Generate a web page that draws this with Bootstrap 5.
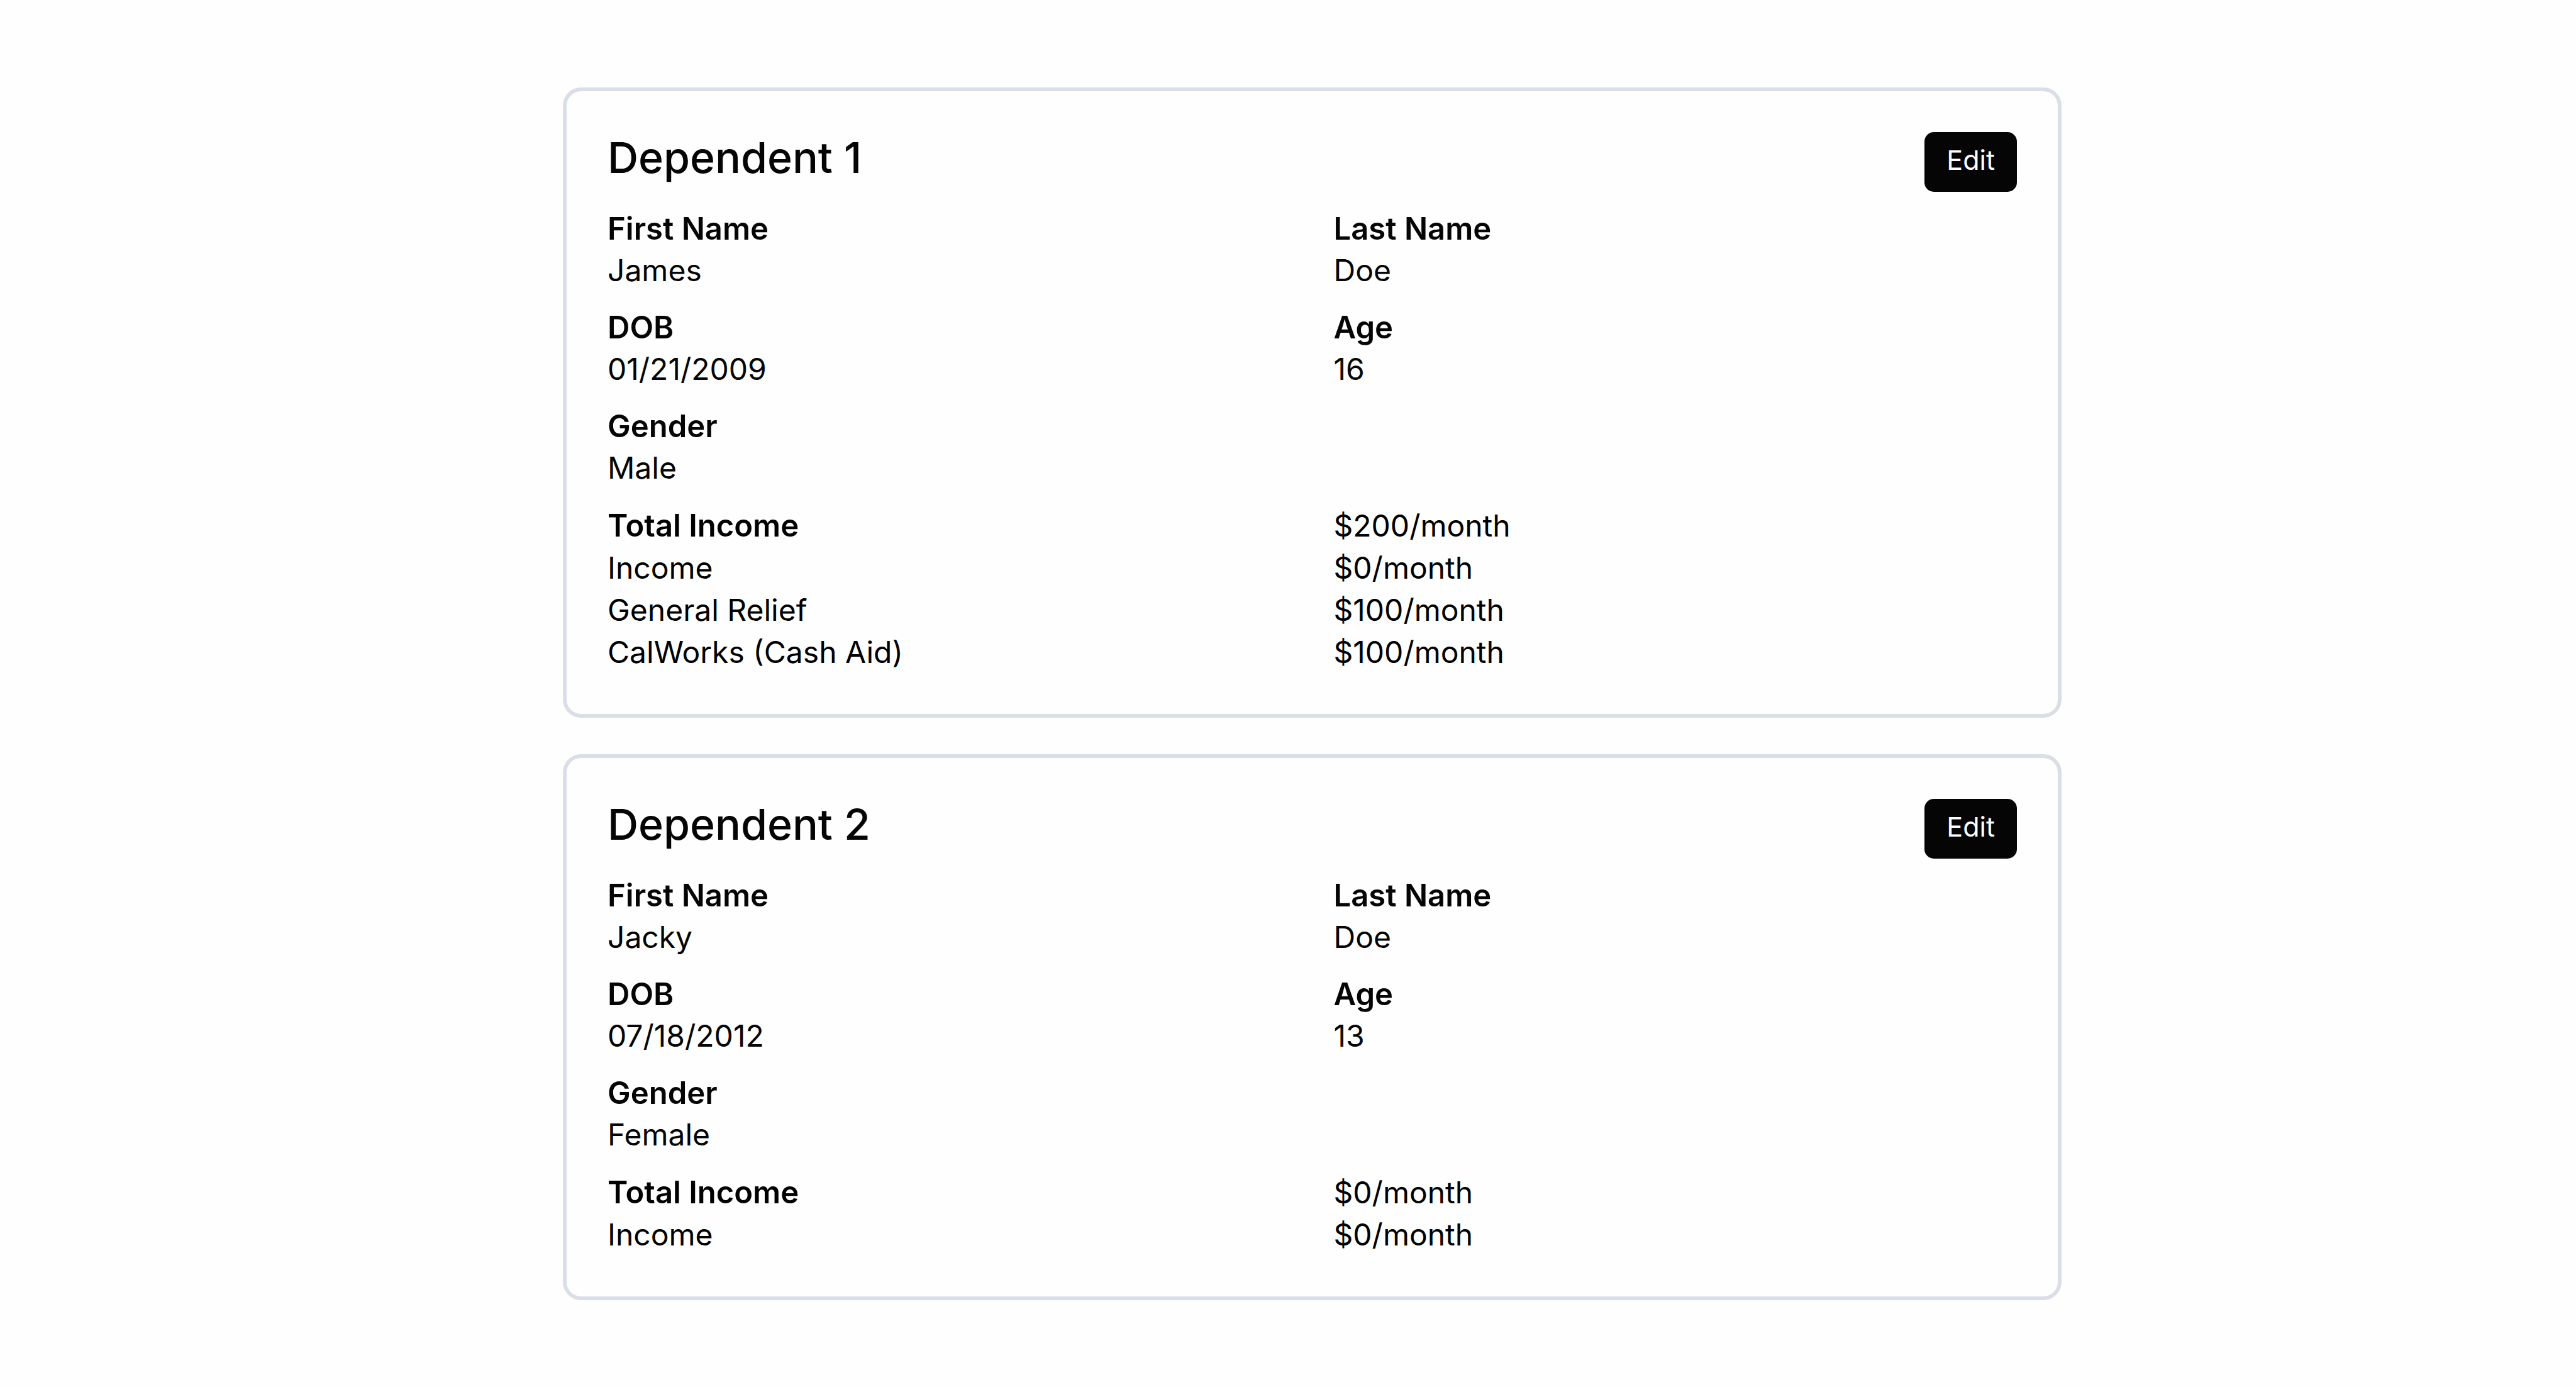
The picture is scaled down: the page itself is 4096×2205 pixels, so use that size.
<!DOCTYPE html>
<html lang="en">
<head>
<meta charset="utf-8">
<meta name="viewport" content="width=device-width, initial-scale=1">
<title>Dependents</title>
<link rel="stylesheet" href="https://cdn.jsdelivr.net/npm/bootstrap@5.3.0/dist/css/bootstrap.min.css">
<style>
  body {
    background: #fefefe;
    color: #050505;
    font-family: Inter, "Liberation Sans", sans-serif;
    font-size: 48px;
    line-height: 66px;
  }
  .dependents { padding: 139px 818px 138px 895px; gap: 58px; }
  .dependent {
    --bs-card-bg: #fefefe;
    --bs-card-color: #050505;
    --bs-card-border-width: 6px;
    --bs-card-border-color: #dadee7;
    --bs-card-border-radius: 29px;
    --bs-card-inner-border-radius: 23px;
    --bs-card-spacer-x: 65px;
    --bs-card-spacer-y: 65px;
  }
  .dependent-head { margin-bottom: 26px; }
  .dependent-title { font-size: 68px; font-weight: 500; line-height: 81px; }
  .btn-edit {
    --bs-btn-bg: #050505;
    --bs-btn-color: #fff;
    --bs-btn-hover-bg: #333;
    --bs-btn-hover-color: #fff;
    --bs-btn-border-width: 0;
    --bs-btn-border-radius: 15px;
    --bs-btn-font-size: 43px;
    --bs-btn-line-height: 61px;
    padding: 14px 35px 20px;
  }
  .field-row { --bs-gutter-x: 68px; }
  .details .field-row { margin-bottom: 25px; }
  .field-label { font-size: 49px; font-weight: 600; }
  .income { color: #000; line-height: 67px; }
  .income dt { font-weight: 400; }
  .income .field-label { font-weight: 600; }
</style>
</head>
<body>
<main class="dependents d-flex flex-column">

  <section class="card dependent" aria-labelledby="dep1">
    <div class="card-body">
      <div class="dependent-head d-flex justify-content-between align-items-start">
        <h2 class="dependent-title mb-0" id="dep1">Dependent 1</h2>
        <button type="button" class="btn btn-edit">Edit</button>
      </div>
      <div class="details">
        <dl class="row field-row">
          <div class="col-6"><dt class="field-label">First Name</dt><dd class="mb-0">James</dd></div>
          <div class="col-6"><dt class="field-label">Last Name</dt><dd class="mb-0">Doe</dd></div>
        </dl>
        <dl class="row field-row">
          <div class="col-6"><dt class="field-label">DOB</dt><dd class="mb-0">01/21/2009</dd></div>
          <div class="col-6"><dt class="field-label">Age</dt><dd class="mb-0">16</dd></div>
        </dl>
        <dl class="row field-row">
          <div class="col-6"><dt class="field-label">Gender</dt><dd class="mb-0">Male</dd></div>
        </dl>
      </div>
      <dl class="row field-row income mb-0">
        <dt class="col-6 field-label">Total Income</dt><dd class="col-6 mb-0">$200/month</dd>
        <dt class="col-6">Income</dt><dd class="col-6 mb-0">$0/month</dd>
        <dt class="col-6">General Relief</dt><dd class="col-6 mb-0">$100/month</dd>
        <dt class="col-6">CalWorks (Cash Aid)</dt><dd class="col-6 mb-0">$100/month</dd>
      </dl>
    </div>
  </section>

  <section class="card dependent" aria-labelledby="dep2">
    <div class="card-body">
      <div class="dependent-head d-flex justify-content-between align-items-start">
        <h2 class="dependent-title mb-0" id="dep2">Dependent 2</h2>
        <button type="button" class="btn btn-edit">Edit</button>
      </div>
      <div class="details">
        <dl class="row field-row">
          <div class="col-6"><dt class="field-label">First Name</dt><dd class="mb-0">Jacky</dd></div>
          <div class="col-6"><dt class="field-label">Last Name</dt><dd class="mb-0">Doe</dd></div>
        </dl>
        <dl class="row field-row">
          <div class="col-6"><dt class="field-label">DOB</dt><dd class="mb-0">07/18/2012</dd></div>
          <div class="col-6"><dt class="field-label">Age</dt><dd class="mb-0">13</dd></div>
        </dl>
        <dl class="row field-row">
          <div class="col-6"><dt class="field-label">Gender</dt><dd class="mb-0">Female</dd></div>
        </dl>
      </div>
      <dl class="row field-row income mb-0">
        <dt class="col-6 field-label">Total Income</dt><dd class="col-6 mb-0">$0/month</dd>
        <dt class="col-6">Income</dt><dd class="col-6 mb-0">$0/month</dd>
      </dl>
    </div>
  </section>

</main>
<script src="https://cdn.jsdelivr.net/npm/bootstrap@5.3.0/dist/js/bootstrap.bundle.min.js"></script>
</body>
</html>
